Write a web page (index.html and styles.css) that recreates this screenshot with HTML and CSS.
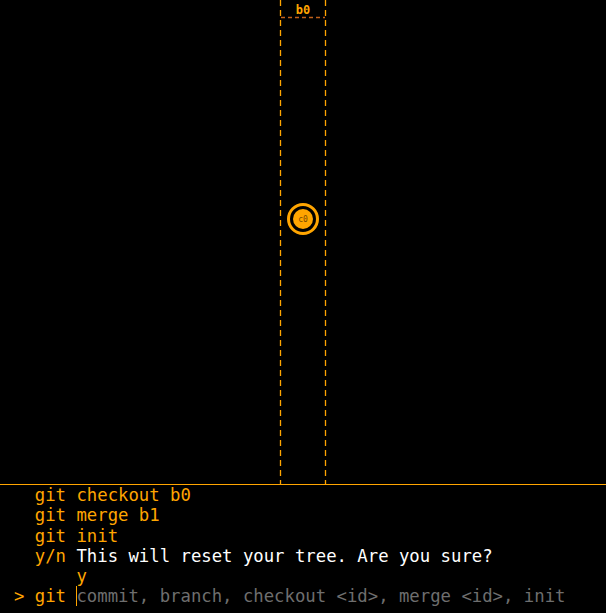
FILE: index.html
```html
<!DOCTYPE html>
<html>
<head>
<meta charset="utf-8">
<link rel="stylesheet" href="styles.css">
</head>
<body>
<div class="app">
  <div class="graph">
    <svg class="canvas" width="606" height="484" viewBox="0 0 606 484">
      <line x1="280.5" y1="0" x2="280.5" y2="484" class="lane"/>
      <line x1="325.5" y1="0" x2="325.5" y2="484" class="lane"/>
      <line x1="281" y1="17.5" x2="325" y2="17.5" class="head"/>
      <text x="303" y="14" class="branch">b0</text>
      <circle cx="303" cy="219" r="14.5" class="ring"/>
      <circle cx="303" cy="219" r="10" class="dot"/>
      <text x="303" y="222" class="commit">c0</text>
    </svg>
  </div>
  <div class="console">
    <div class="line"><span class="pre">  </span><span class="cmd">git</span> <span class="cmd">checkout b0</span></div>
    <div class="line"><span class="pre">  </span><span class="cmd">git</span> <span class="cmd">merge b1</span></div>
    <div class="line"><span class="pre">  </span><span class="cmd">git</span> <span class="cmd">init</span></div>
    <div class="line"><span class="pre">  </span><span class="cmd">y/n</span> <span class="msg">This will reset your tree. Are you sure?</span></div>
    <div class="line"><span class="pre">      </span><span class="cmd">y</span></div>
    <div class="line"><span class="cmd">&gt; git </span><span class="cursor"></span><span class="hint">commit, branch, checkout &lt;id&gt;, merge &lt;id&gt;, init</span></div>
  </div>
</div>
</body>
</html>
```

FILE: styles.css
```css
html, body {
  margin: 0;
  padding: 0;
  background: #000;
}
.app {
  width: 606px;
  height: 613px;
  display: flex;
  flex-direction: column;
  overflow: hidden;
  background: #000;
}
.graph {
  height: 484px;
  flex: none;
}
.canvas {
  display: block;
}
.lane {
  stroke: #ffa500;
  stroke-width: 1.3;
  stroke-dasharray: 6 4;
}
.head {
  stroke: #c0601a;
  stroke-width: 1.3;
  stroke-dasharray: 4 3;
}
.branch {
  fill: #ffa500;
  font-family: "DejaVu Sans Mono", monospace;
  font-weight: bold;
  font-size: 12px;
  text-anchor: middle;
}
.ring {
  fill: #000;
  stroke: #ffa500;
  stroke-width: 3;
}
.dot {
  fill: #ffa500;
}
.commit {
  fill: #7a4a00;
  font-family: "DejaVu Sans Mono", monospace;
  font-size: 8px;
  text-anchor: middle;
}
.console {
  flex: 1;
  border-top: 1px solid #ffa500;
  padding: 0 0 0 14px;
  font-family: "DejaVu Sans Mono", monospace;
  font-size: 17.3px;
  line-height: 20.3px;
  color: #ffa500;
}
.line {
  height: 20.3px;
  white-space: pre;
}
.cmd {
  color: #ffa500;
}
.msg {
  color: #fff;
}
.hint {
  color: #6e6e6e;
}
.cursor {
  display: inline-block;
  width: 1px;
  height: 20px;
  margin-right: -1px;
  background: #ffa500;
  vertical-align: -4px;
}
```
